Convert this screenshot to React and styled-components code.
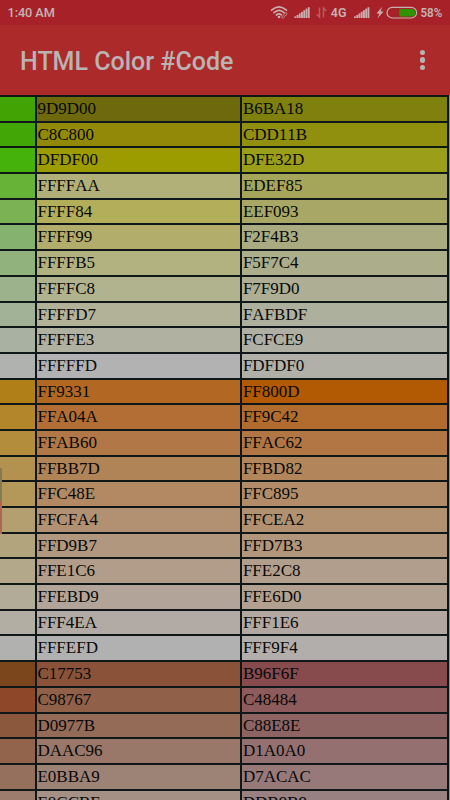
import React from "react";
import styled, { createGlobalStyle } from "styled-components";

const GlobalStyle = createGlobalStyle`
  * { box-sizing: border-box; }
  html, body { margin: 0; padding: 0; background: #a9a9a9; }
  body { width: 450px; height: 800px; overflow: hidden; }
`;

const Screen = styled.div`
  width: 450px;
  height: 800px;
  display: flex;
  flex-direction: column;
  overflow: hidden;
  background: #929294;
`;

const StatusBar = styled.header`
  flex: none;
  height: 25px;
  padding: 0 8px 0 7.5px;
  display: flex;
  align-items: center;
  justify-content: space-between;
  background: #a62228;
  color: #c5b3b4;
  font: 500 12.8px/25px Roboto, sans-serif;
`;

const Clock = styled.span`
  letter-spacing: -0.12px;
`;

const StatusIcons = styled.svg`
  display: block;
  flex: none;
  width: 180px;
  height: 25px;
  margin-right: -8px;
`;

const StatusLabel = styled.text`
  font: 600 12.5px Roboto, sans-serif;
  fill: #c5b3b4;
`;

const AppBar = styled.div`
  flex: none;
  height: 70px;
  padding: 0 20px;
  display: flex;
  align-items: center;
  justify-content: space-between;
  background: #ac2a2a;
`;

const Title = styled.h1`
  margin: 0;
  padding-top: 3px;
  font: 500 25px/30px Roboto, sans-serif;
  color: #b8b4b4;
`;

const MenuButton = styled.button`
  width: 15px;
  height: 30px;
  padding: 0 5px;
  border: 0;
  background: none;
  display: flex;
  flex-direction: column;
  align-items: center;
  justify-content: center;
  gap: 2.4px;
`;

const Dot = styled.span`
  flex: none;
  width: 5.2px;
  height: 5.2px;
  border-radius: 50%;
  background: #b8b4b4;
`;

const Viewport = styled.main`
  position: relative;
  flex: 1;
  min-height: 0;
  overflow: hidden;
`;

const ColorTable = styled.div`
  width: 449px;
  padding: 2px 2px 0 0;
  display: grid;
  grid-template-columns: 35px 203.7px 204.8px;
  grid-auto-rows: 23.7px;
  gap: 2px 1.75px;
  background: #101719;
`;

const Swatch = styled.div`
  padding-left: 0.7px;
  overflow: hidden;
  white-space: nowrap;
  background: ${(p) => p.$color};
  color: #070908;
  font: 17px/23.7px "Liberation Serif", "Times New Roman", serif;
  font-kerning: none;
`;

const EdgeMark = styled.div`
  position: absolute;
  left: 0;
  top: 373px;
  width: 2px;
  height: 66px;
  background: linear-gradient(#817b58 0 33px, #ae6651 33px);
`;

const rows = [
  ["#41a404", "9D9D00", "#6d690c", "B6BA18", "#7f800e"],
  ["#41a606", "C8C800", "#918907", "CDD11B", "#918f0e"],
  ["#45b10b", "DFDF00", "#9c9b00", "DFE32D", "#9b9e18"],
  ["#67b338", "FFFFAA", "#b2b079", "EDEF85", "#a6a65b"],
  ["#7bb253", "FFFF84", "#b2ae59", "EEF093", "#a8a766"],
  ["#85b26e", "FFFF99", "#b2ad6b", "F2F4B3", "#aaab80"],
  ["#91b27c", "FFFFB5", "#b1b27f", "F5F7C4", "#acad8b"],
  ["#9bb28c", "FFFFC8", "#b1b28e", "F7F9D0", "#adae93"],
  ["#a2b297", "FFFFD7", "#b1b298", "FAFBDF", "#aeb09e"],
  ["#a9b1a2", "FFFFE3", "#b1b1a1", "FCFCE9", "#afafa4"],
  ["#b0b2b0", "FFFFFD", "#b2b2b2", "FDFDF0", "#b0b0a9"],
  ["#b17f18", "FF9331", "#b26722", "FF800D", "#b25a03"],
  ["#b3862b", "FFA04A", "#b26e34", "FF9C42", "#b26c2d"],
  ["#b38d3b", "FFAB60", "#b27746", "FFAC62", "#b27644"],
  ["#b3914f", "FFBB7D", "#b18457", "FFBD82", "#b2865a"],
  ["#b3985a", "FFC48E", "#b28963", "FFC895", "#b28c69"],
  ["#b39f70", "FFCFA4", "#b29172", "FFCEA2", "#b29170"],
  ["#b2a57d", "FFD9B7", "#b2977f", "FFD7B3", "#b2967c"],
  ["#b3a98a", "FFE1C6", "#b29d8a", "FFE2C8", "#b29e8c"],
  ["#b2ab97", "FFEBD9", "#b2a498", "FFE6D0", "#b2a191"],
  ["#b2aea3", "FFF4EA", "#b2aaa4", "FFF1E6", "#b2a8a1"],
  ["#b1b1b0", "FFFEFD", "#b2b1b1", "FFF9F4", "#b2aeab"],
  ["#7c461d", "C17753", "#8a5339", "B96F6F", "#874a4d"],
  ["#8e4829", "C98767", "#906048", "C48484", "#8d5b5b"],
  ["#8c583d", "D0977B", "#936b57", "C88E8E", "#8e6463"],
  ["#93644c", "DAAC96", "#9a7869", "D1A0A0", "#947170"],
  ["#94705d", "E0BBA9", "#9d8276", "D7ACAC", "#977979"],
  ["#9b7c6d", "E8CCBF", "#a59085", "DDB9B9", "#9a8181"],
];

function SignalBars({ x }) {
  return (
    <g transform={`translate(${x} 0)`} fill="#c8acae">
      {[1.6, 3, 4.6, 6.2, 7.8, 9.4, 10.8].map((h, i) => (
        <rect key={i} x={i * 2.25} y={18 - h} width="1.9" height={h} />
      ))}
    </g>
  );
}

function StatusSymbols() {
  return (
    <StatusIcons viewBox="0 0 180 25">
      <g fill="none" stroke="#c8afb0" strokeWidth="1.7" strokeLinecap="round">
        <path d="M1.6 10.2Q9 3.6 16.4 10.2" />
        <path d="M4 12.7Q9 8.2 14 12.7" />
        <path d="M6.4 15Q9 12.8 11.3 14.8" />
      </g>
      <circle cx="9" cy="17" r="1.3" fill="#c8afb0" />
      <path
        d="M11.5 17.4l4.2-5 1.5 1.2-4.1 4.8z"
        fill="#a62228"
        stroke="#bd8f92"
        strokeWidth="1"
      />
      <SignalBars x={24.3} />
      <path
        d="M49.5 7.5V17.2L46.7 14.2M53.5 17.5V8L56.2 11"
        fill="none"
        stroke="#bb5c61"
        strokeWidth="1.5"
      />
      <StatusLabel x="60.8" y="17.3">4G</StatusLabel>
      <SignalBars x={84} />
      <path d="M112.2 6.8L106.5 13.5H109.4L107.4 18.6L113.6 11.5H110.6Z" fill="#c8afb0" />
      <rect x="117" y="7.3" width="29.6" height="10.7" rx="5.3" fill="none" stroke="#c8afb0" strokeWidth="1.2" />
      <path d="M129.3 8.9H141.7Q145.3 8.9 145.3 12.7T141.7 16.6H129.3Z" fill="#2e9400" />
      <StatusLabel x="150.5" y="17.3" textLength="21.8" lengthAdjust="spacingAndGlyphs">58%</StatusLabel>
    </StatusIcons>
  );
}

export default function App() {
  return (
    <>
      <GlobalStyle />
      <Screen>
        <StatusBar>
          <Clock>1:40 AM</Clock>
          <StatusSymbols />
        </StatusBar>
        <AppBar>
          <Title>HTML Color #Code</Title>
          <MenuButton aria-label="More options">
            <Dot />
            <Dot />
            <Dot />
          </MenuButton>
        </AppBar>
        <Viewport>
          <ColorTable>
            {rows.map(([edge, leftCode, leftColor, rightCode, rightColor]) => (
              <React.Fragment key={leftCode}>
                <Swatch $color={edge} />
                <Swatch $color={leftColor}>{leftCode}</Swatch>
                <Swatch $color={rightColor}>{rightCode}</Swatch>
              </React.Fragment>
            ))}
          </ColorTable>
          <EdgeMark />
        </Viewport>
      </Screen>
    </>
  );
}
